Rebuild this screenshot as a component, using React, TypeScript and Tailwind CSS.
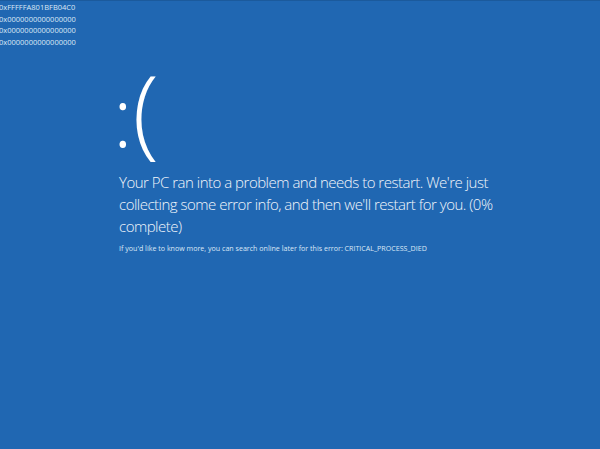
const dumpLines = [
  "0xFFFFFA801BFB04C0",
  "0x0000000000000000",
  "0x0000000000000000",
  "0x0000000000000000",
]

export default function App() {
  return (
    <div className="h-[449px] w-full overflow-hidden bg-[#2067b2] text-white border-t border-[#1b5a9c]" style={{ fontFamily: '"Open Sans", "Noto Sans", sans-serif' }}>
      <div className="ml-[-1px] pt-px text-[7.5px] leading-[11.5px] text-[#dce8f6]">
        {dumpLines.map((line, i) => (
          <div key={i}>{line}</div>
        ))}
      </div>

      <div className="ml-[119px] mt-[44px]">
        <div className="ml-[-6px] flex h-[70px] items-start font-light leading-none">
          <span className="mt-[-18px] text-[82px]">:</span>
          <span className="mt-[-31px] text-[97px]">(</span>
        </div>
        <div className="mt-[9px] text-[15px] font-light leading-[22px] tracking-[-0.5px] text-[#f2f6fb]">
          Your PC ran into a problem and needs to restart. We're just
          <br />
          collecting some error info, and then we'll restart for you. (0%
          <br />
          complete)
        </div>
        <div className="mt-[6px] text-[7.1px] leading-[10px] text-[#dce8f6]">
          If you'd like to know more, you can search online later for this error: CRITICAL_PROCESS_DIED
        </div>
      </div>
    </div>
  )
}
